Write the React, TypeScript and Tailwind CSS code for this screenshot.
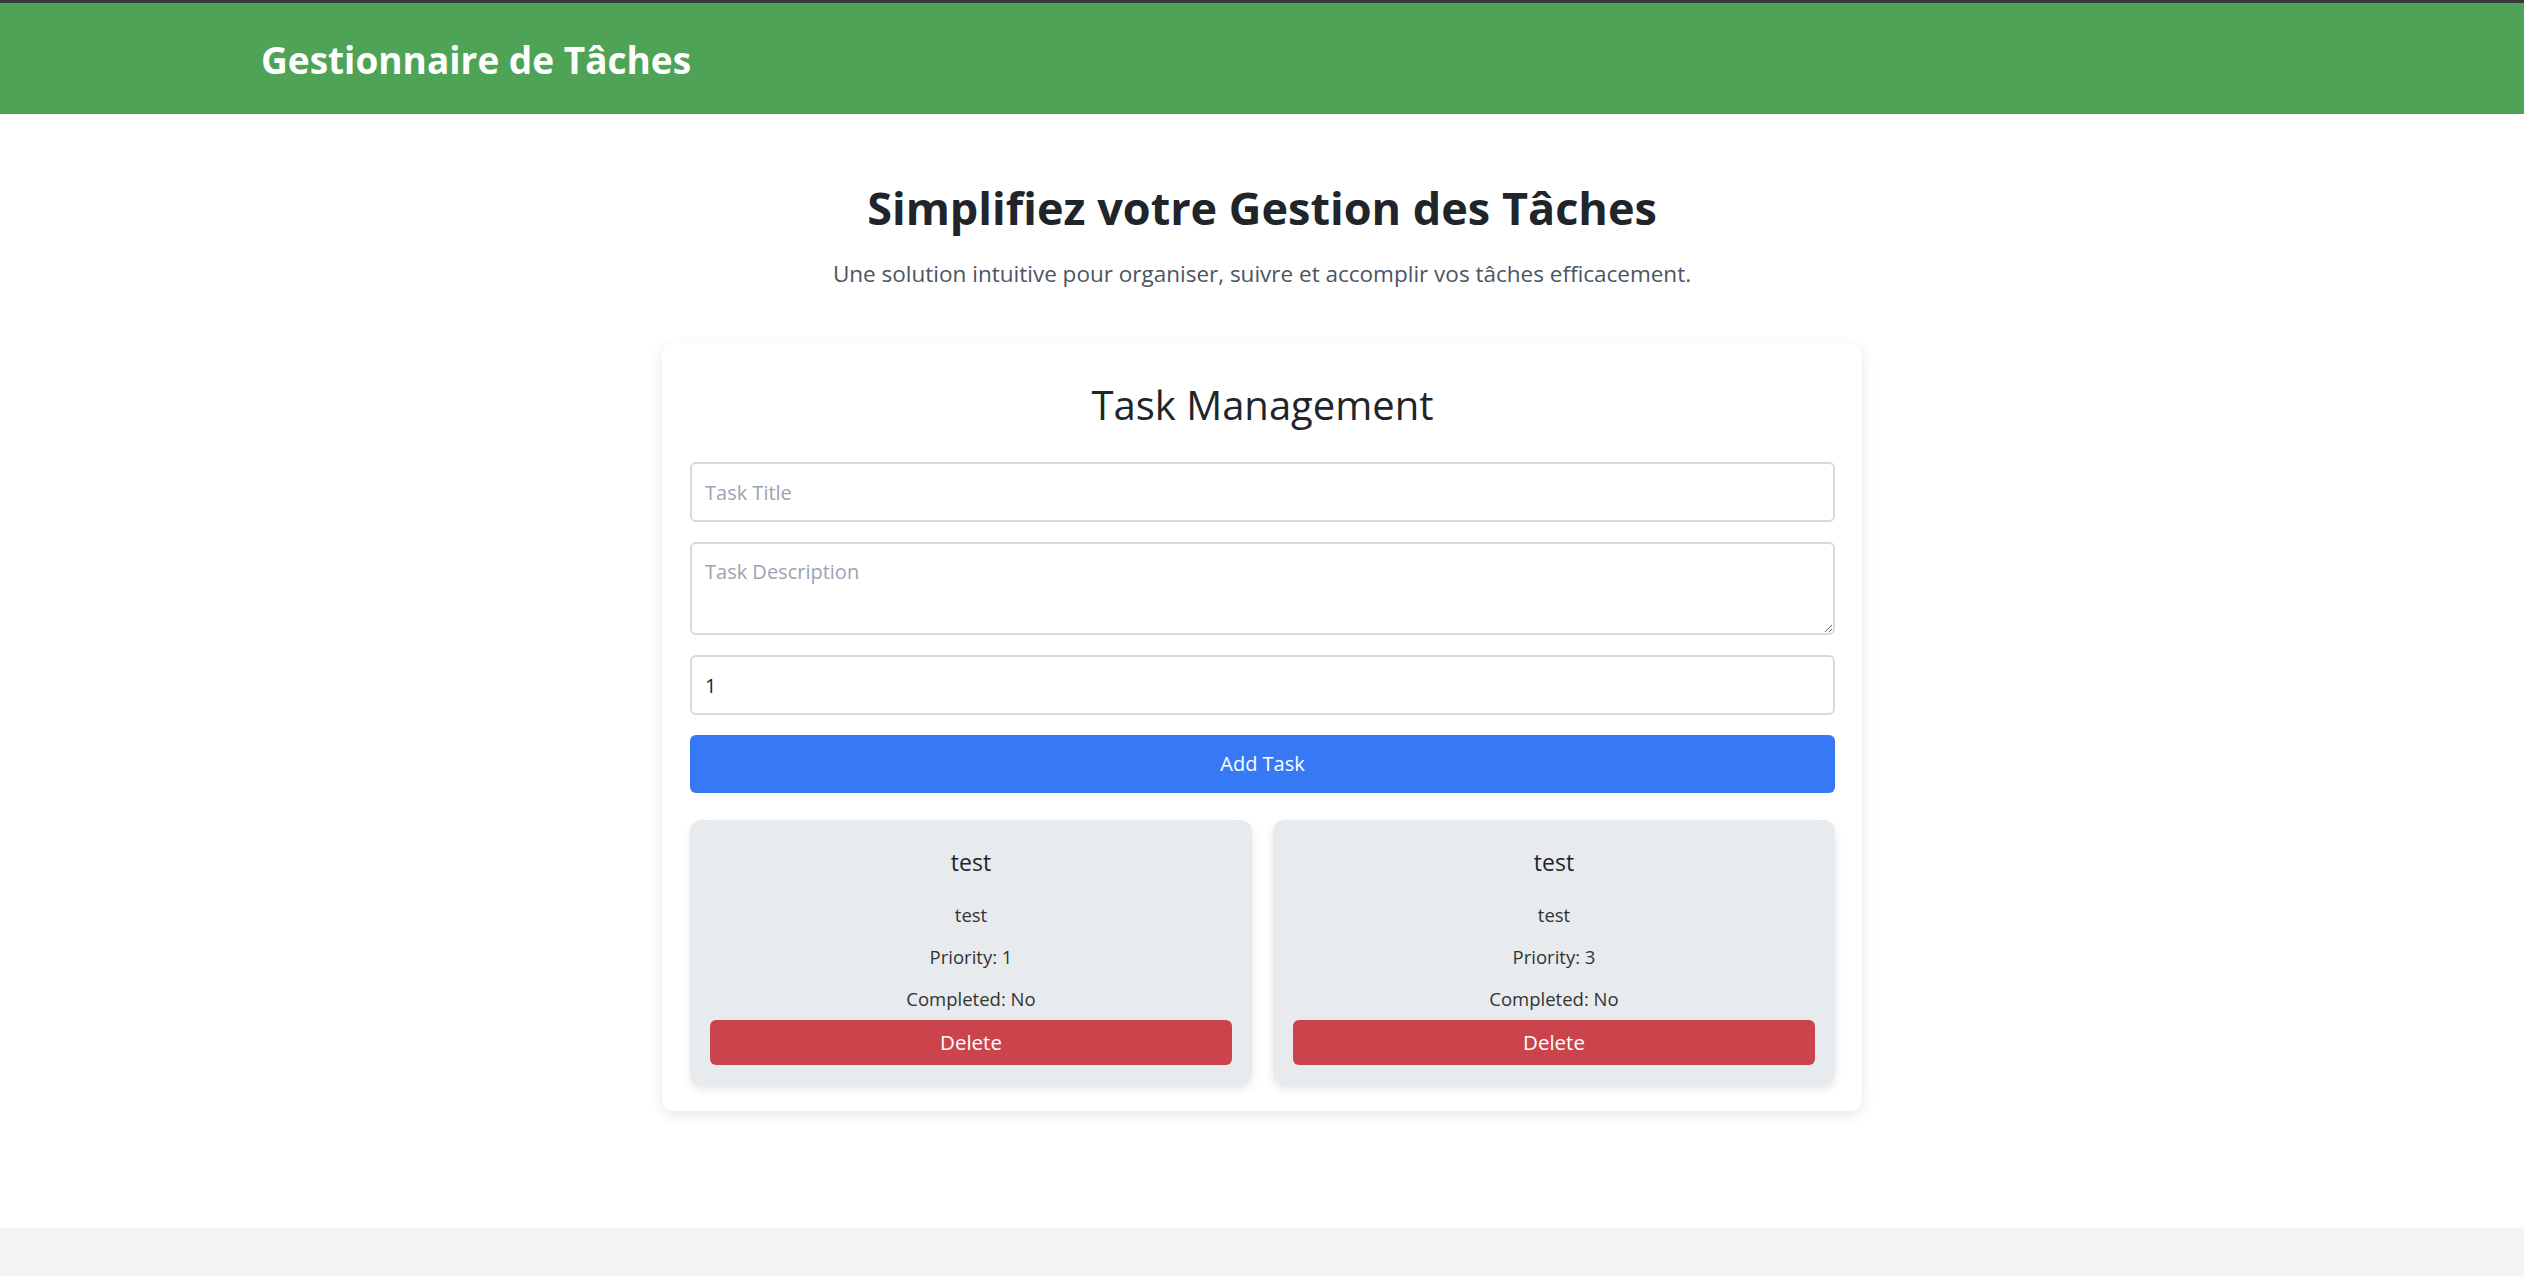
// Task manager landing page with form and task cards

import { useState } from "react";

interface Task {
  title: string;
  description: string;
  priority: number;
  completed: boolean;
}

const TaskCard = ({ task, onDelete }: { task: Task; onDelete: () => void }) => {
  return (
    <div className="rounded-[12px] bg-[#e8ebee] p-[20px] shadow-[0_4px_8px_rgba(0,0,0,0.1)] text-center">
      <h3 className="mb-[10px] text-[23px] leading-[44px] text-[#212529]">{task.title}</h3>
      <p className="text-[18.5px] leading-[42px] text-[#333]">{task.description}</p>
      <p className="text-[18.5px] leading-[42px] text-[#333]">Priority: {task.priority}</p>
      <p className="text-[18.5px] leading-[42px] text-[#333]">Completed: {task.completed ? "Yes" : "No"}</p>
      <button
        onClick={onDelete}
        className="w-full h-[45px] rounded-[6px] bg-[#cb444b] text-white text-[20.5px]"
      >
        Delete
      </button>
    </div>
  );
};

export default function App() {
  const [tasks, setTasks] = useState<Task[]>([
    { title: "test", description: "test", priority: 1, completed: false },
    { title: "test", description: "test", priority: 3, completed: false },
  ]);
  const [title, setTitle] = useState("");
  const [description, setDescription] = useState("");
  const [priority, setPriority] = useState("1");

  const addTask = () => {
    if (!title) return;
    setTasks([...tasks, { title, description, priority: Number(priority), completed: false }]);
    setTitle("");
    setDescription("");
  };

  return (
    <div className="min-h-[1276px] flex flex-col font-['Open_Sans',sans-serif]">
      <div className="h-[3px] bg-[#393939]" />
      <header className="h-[111px] bg-[#4ea356] flex items-center pl-[261px] pt-[3px]">
        <h1 className="text-[37px] font-bold text-white">Gestionnaire de Tâches</h1>
      </header>

      <main className="flex-1 bg-white flex flex-col items-center pt-[67px] pb-[117px]">
        <h2 className="text-[45px] leading-[54px] font-bold text-[#212529]">
          Simplifiez votre Gestion des Tâches
        </h2>
        <p className="mt-[21px] text-[22.5px] leading-[36px] text-[#4b5563]">
          Une solution intuitive pour organiser, suivre et accomplir vos tâches efficacement.
        </p>

        <section className="mt-[51px] w-[1200px] rounded-[12px] bg-white shadow-[0_4px_14px_rgba(0,0,0,0.1)] pl-[28px] pr-[27px] pt-[35px] pb-[26px]">
          <h2 className="text-center text-[40px] leading-[54px] text-[#212529]">Task Management</h2>

          <div className="mt-[30px] flex flex-col gap-[20px]">
            <input
              value={title}
              onChange={(e) => setTitle(e.target.value)}
              placeholder="Task Title"
              className="h-[60px] w-full rounded-[6px] border-2 border-[#d6d9dd] px-[13px] text-[20px] text-[#212529] placeholder:text-[#9ba3b4] outline-none"
            />
            <textarea
              value={description}
              onChange={(e) => setDescription(e.target.value)}
              placeholder="Task Description"
              className="h-[93px] w-full rounded-[6px] border-2 border-[#d6d9dd] px-[13px] py-[13px] text-[20px] text-[#212529] placeholder:text-[#9ba3b4] outline-none"
            />
            <input
              type="text"
              value={priority}
              onChange={(e) => setPriority(e.target.value)}
              className="h-[60px] w-full rounded-[6px] border-2 border-[#d6d9dd] px-[13px] text-[20px] text-[#212529] outline-none"
            />
            <button
              onClick={addTask}
              className="h-[58px] w-full rounded-[6px] bg-[#3779f5] text-white text-[20px]"
            >
              Add Task
            </button>
          </div>

          <div className="mt-[27px] grid grid-cols-2 gap-[21px]">
            {tasks.map((task, i) => (
              <TaskCard
                key={i}
                task={task}
                onDelete={() => setTasks(tasks.filter((_, j) => j !== i))}
              />
            ))}
          </div>
        </section>
      </main>

      <footer className="h-[48px] bg-[#f3f4f6]" />
    </div>
  );
}
